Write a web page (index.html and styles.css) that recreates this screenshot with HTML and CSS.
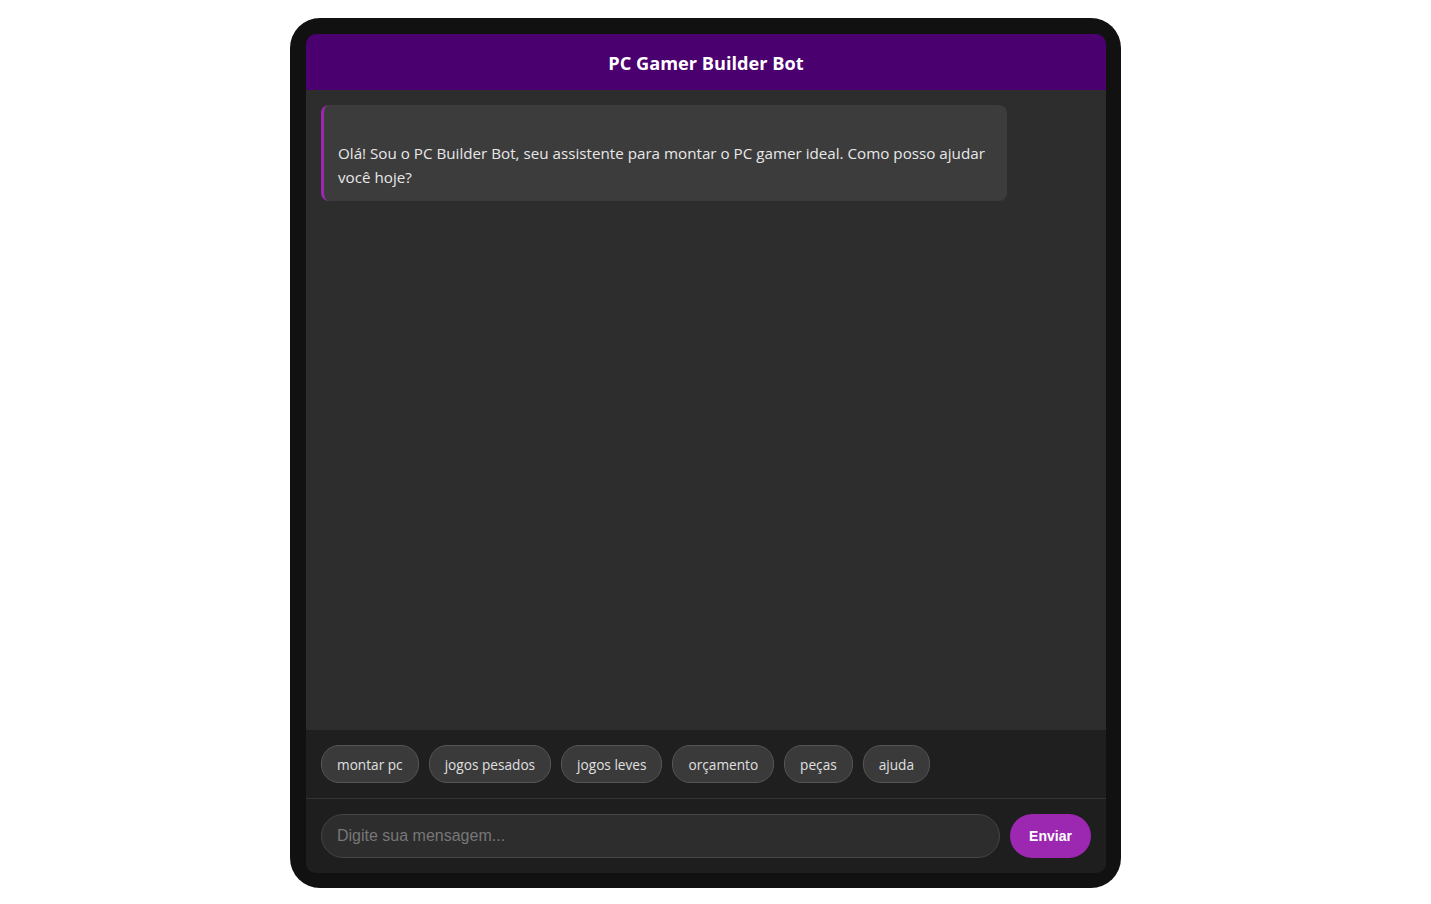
FILE: index.html
```html
<!DOCTYPE html>
<html lang="pt-BR">
<head>
<meta charset="utf-8">
<title>PC Gamer Builder Bot</title>
<link rel="stylesheet" href="styles.css">
</head>
<body>
<div class="page">
  <div class="device">
    <div class="chat">
      <header class="chat-header">PC Gamer Builder Bot</header>
      <main class="messages">
        <div class="msg bot"><br>Olá! Sou o PC Builder Bot, seu assistente para montar o PC gamer ideal. Como posso ajudar você hoje?</div>
      </main>
      <div class="chips">
        <button class="chip">montar pc</button>
        <button class="chip">jogos pesados</button>
        <button class="chip">jogos leves</button>
        <button class="chip">orçamento</button>
        <button class="chip">peças</button>
        <button class="chip">ajuda</button>
      </div>
      <form class="composer">
        <input class="input" type="text" placeholder="Digite sua mensagem...">
        <button class="send" type="button">Enviar</button>
      </form>
    </div>
  </div>
</div>
</body>
</html>
```
FILE: styles.css
```css
* { box-sizing: border-box; }
html, body { margin: 0; padding: 0; background: #ffffff; }
body { font-family: "Open Sans", "Noto Sans", sans-serif; }
.page {
  display: flex;
  justify-content: center;
  padding: 18px 20px 0 0;
}
.device {
  width: 831px;
  height: 870px;
  background: #111111;
  border-radius: 30px;
  padding: 16px 15px 15px 16px;
}
.chat {
  height: 100%;
  display: flex;
  flex-direction: column;
  background: #1e1e1e;
  border-radius: 10px;
  overflow: hidden;
}
.chat-header {
  height: 56px;
  flex: none;
  background: #4b0070;
  color: #ffffff;
  font-weight: 700;
  font-size: 18.2px;
  display: flex;
  align-items: center;
  justify-content: center;
  padding-top: 2px;
}
.messages {
  flex: 1;
  background: #2d2d2d;
  padding: 15px;
}
.msg {
  width: 686px;
  background: #3c3c3c;
  color: #e8e8e8;
  border-left: 3px solid #9c27b0;
  border-radius: 8px;
  padding: 12px 14px 12px 14px;
  font-size: 15.2px;
  line-height: 24px;
}
.chips {
  flex: none;
  height: 69px;
  background: #1f1f1f;
  border-bottom: 1px solid #333333;
  display: flex;
  align-items: flex-start;
  gap: 10px;
  padding: 15px;
}
.chip {
  height: 38px;
  padding: 1px 15px 0;
  background: #3a3a3a;
  color: #e0e0e0;
  border: 1px solid #555555;
  border-radius: 18px;
  font-family: "Open Sans", "Noto Sans", sans-serif;
  font-size: 13.65px;
}
.composer {
  flex: none;
  height: 74px;
  margin: 0;
  background: #1e1e1e;
  display: flex;
  gap: 10px;
  padding: 15px;
}
.input {
  flex: 1;
  height: 44px;
  background: #2d2d2d;
  border: 1px solid #444444;
  border-radius: 22px;
  padding: 0 15px;
  color: #dddddd;
  font-family: "Liberation Sans", Arial, sans-serif;
  font-size: 16px;
  outline: none;
}
.input::placeholder { color: #777777; }
.send {
  width: 81px;
  height: 44px;
  background: #9c27b0;
  color: #ffffff;
  border: none;
  border-radius: 22px;
  font-family: "Liberation Sans", Arial, sans-serif;
  font-weight: 700;
  font-size: 14px;
}
```
